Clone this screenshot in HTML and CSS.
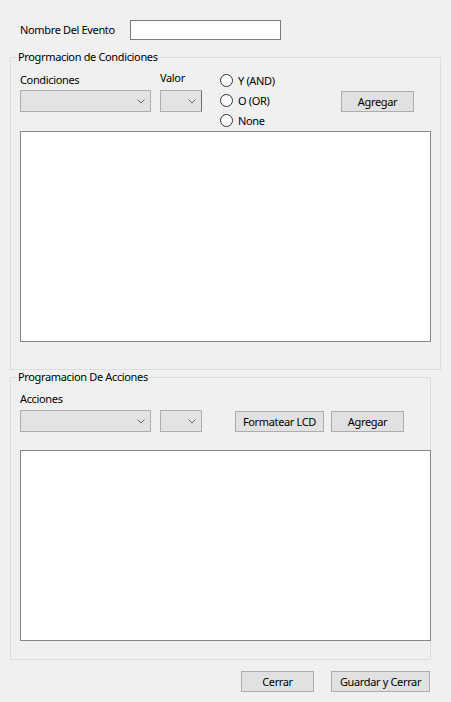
FILE: index.html
```html
<!DOCTYPE html>
<html lang="es">
<head>
<meta charset="utf-8">
<title>Evento</title>
<link rel="stylesheet" href="styles.css">
</head>
<body>
<div class="form">
  <div class="name-row">
    <label class="name-label">Nombre Del Evento</label>
    <div class="textbox"></div>
  </div>

  <fieldset class="group group-cond">
    <legend>Progrmacion de Condiciones</legend>
    <div class="cond-row">
      <div class="field field-cond">
        <span class="lbl">Condiciones</span>
        <div class="combo combo-wide"><svg class="chev" width="8" height="5" viewBox="0 0 8 5"><path d="M0.5 0.5 L4 4 L7.5 0.5" fill="none" stroke="#606060" stroke-width="1"/></svg></div>
      </div>
      <div class="field field-valor">
        <span class="lbl">Valor</span>
        <div class="combo combo-narrow combo-edge"><svg class="chev" width="8" height="5" viewBox="0 0 8 5"><path d="M0.5 0.5 L4 4 L7.5 0.5" fill="none" stroke="#606060" stroke-width="1"/></svg></div>
      </div>
      <div class="radios">
        <div class="radio"><span class="dot"></span><span>Y (AND)</span></div>
        <div class="radio"><span class="dot"></span><span>O (OR)</span></div>
        <div class="radio"><span class="dot"></span><span>None</span></div>
      </div>
      <div class="btn btn-add1">Agregar</div>
    </div>
    <div class="listbox listbox-cond"></div>
  </fieldset>

  <fieldset class="group group-acc">
    <legend>Programacion De Acciones</legend>
    <span class="lbl lbl-acc">Acciones</span>
    <div class="acc-row">
      <div class="combo combo-wide"><svg class="chev" width="8" height="5" viewBox="0 0 8 5"><path d="M0.5 0.5 L4 4 L7.5 0.5" fill="none" stroke="#606060" stroke-width="1"/></svg></div>
      <div class="combo combo-narrow combo-acc2"><svg class="chev" width="8" height="5" viewBox="0 0 8 5"><path d="M0.5 0.5 L4 4 L7.5 0.5" fill="none" stroke="#606060" stroke-width="1"/></svg></div>
      <div class="btn btn-lcd">Formatear LCD</div>
      <div class="btn btn-add2">Agregar</div>
    </div>
    <div class="listbox listbox-acc"></div>
  </fieldset>

  <div class="footer">
    <div class="btn btn-close">Cerrar</div>
    <div class="btn btn-save">Guardar y Cerrar</div>
  </div>
</div>
</body>
</html>
```

FILE: styles.css
```css
html, body {
  margin: 0;
  padding: 0;
  background: #f0f0f0;
}
body {
  font-family: "Noto Sans", "Open Sans", sans-serif;
  font-size: 11px;
  letter-spacing: -0.35px;
  color: #000;
  width: 451px;
  height: 702px;
  overflow: hidden;
}
.form {
  padding: 20px 0 0 10px;
}
.name-row {
  display: flex;
  align-items: center;
  padding-left: 10px;
}
.name-label {
  width: 110px;
  line-height: 16px;
}
.textbox {
  width: 151px;
  height: 20px;
  box-sizing: border-box;
  background: #fff;
  border: 1px solid #7a7a7a;
}
.group {
  margin: 9px 0 0 0;
  padding: 0 9px 27px 9px;
  border: 1px solid #dcdcdc;
  box-sizing: border-box;
  min-width: 0;
}
.group legend {
  padding: 0 1px;
  margin-left: -3px;
  line-height: 16px;
}
.group-cond {
  width: 431px;
}
.group-acc {
  width: 421px;
  margin-top: -1px;
  padding: 0 0 18px 9px;
}
.lbl {
  display: block;
  line-height: 16px;
}
.cond-row {
  display: flex;
  align-items: flex-start;
  margin-top: 5px;
}
.field {
  display: flex;
  flex-direction: column;
}
.field-cond {
  padding-top: 2px;
}
.field-cond .combo {
  margin-top: 2px;
}
.field-valor {
  margin-left: 9px;
}
.field-valor .combo {
  margin-top: 4px;
}
.combo {
  height: 22px;
  box-sizing: border-box;
  background: #e3e3e3;
  border: 1px solid #adadad;
  display: flex;
  align-items: center;
  justify-content: flex-end;
  padding-right: 5px;
}
.combo-wide { width: 131px; }
.combo-narrow { width: 42px; }
.combo-edge { border-right-color: #6d6d6d; }
.chev { display: block; }
.radios {
  margin-left: 18px;
  display: flex;
  flex-direction: column;
}
.radio {
  height: 20px;
  display: flex;
  align-items: center;
}
.dot {
  width: 13px;
  height: 13px;
  box-sizing: border-box;
  border: 1px solid #333;
  border-radius: 50%;
  background: #fff;
  margin-right: 5px;
}
.btn {
  box-sizing: border-box;
  height: 21px;
  background: #e1e1e1;
  border: 1px solid #adadad;
  display: flex;
  align-items: center;
  justify-content: center;
  line-height: 16px;
}
.btn-add1 {
  width: 73px;
  margin-left: auto;
  margin-right: 17px;
  margin-top: 21px;
}
.listbox {
  width: 411px;
  box-sizing: border-box;
  background: #fff;
  border: 1px solid #828790;
}
.listbox-cond {
  height: 211px;
  margin-top: 1px;
}
.lbl-acc {
  margin-top: 6px;
}
.acc-row {
  display: flex;
  align-items: flex-start;
  margin-top: 3px;
}
.combo-acc2 { margin-left: 9px; }
.btn-lcd {
  width: 89px;
  margin-left: 33px;
  margin-top: 1px;
}
.btn-add2 {
  width: 73px;
  margin-left: 7px;
  margin-top: 1px;
}
.listbox-acc {
  height: 191px;
  margin-top: 18px;
}
.footer {
  width: 420px;
  display: flex;
  justify-content: flex-end;
  margin-top: 11px;
}
.btn-close { width: 73px; }
.btn-save { width: 99px; margin-left: 17px; }
```
